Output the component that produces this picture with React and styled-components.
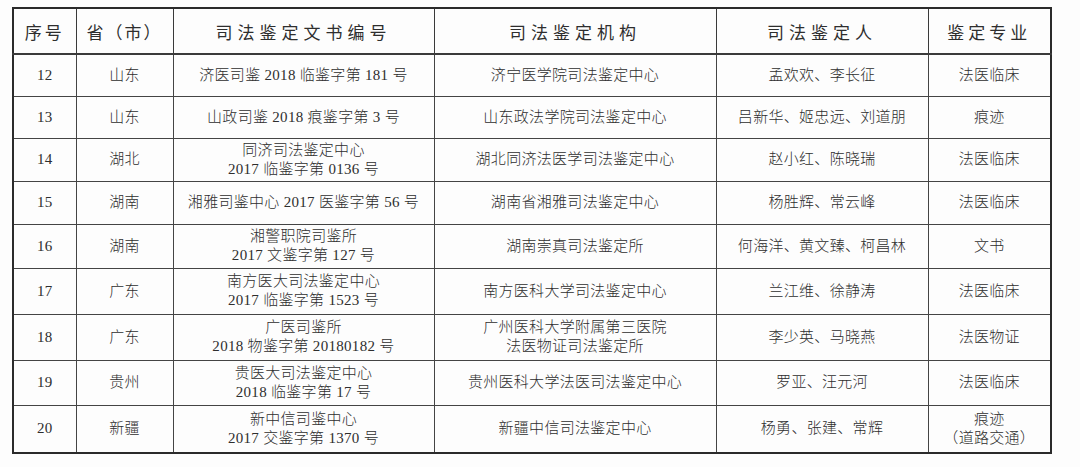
import React from "react";
import styled, { createGlobalStyle } from "styled-components";

const GlobalStyle = createGlobalStyle`
  html, body {
    margin: 0;
    padding: 0;
    background: #ffffff;
  }
`;

const Page = styled.div`
  width: 1080px;
  height: 467px;
  box-sizing: border-box;
  padding: 7px 0 0 12px;
  background: #fdfdfd;
`;

const Table = styled.table`
  width: 1038px;
  border-collapse: collapse;
  table-layout: fixed;
  border: 2px solid #2b2b2b;
  color: #2e2e2e;
  font-family: "Liberation Serif", "Noto Sans CJK SC", serif;
`;

const HeadCell = styled.th`
  border: 1px solid #3a3a3a;
  border-bottom-width: 2px;
  font-weight: 400;
  font-size: 17px;
  letter-spacing: ${(props) => props.spacing || 4}px;
  text-align: center;
  padding: 0;
  height: 44px;
`;

const Cell = styled.td`
  border: 1px solid #444;
  font-size: 15px;
  font-weight: 300;
  letter-spacing: 0.3px;
  line-height: 19px;
  text-align: center;
  vertical-align: middle;
  padding: 0;
  white-space: nowrap;
`;

const Row = styled.tr`
  height: ${(props) => props.h}px;
`;

const columns = [
  { title: "序号", width: 63, spacing: 3 },
  { title: "省（市）", width: 97, spacing: 2 },
  { title: "司法鉴定文书编号", width: 261, spacing: 5 },
  { title: "司法鉴定机构", width: 282, spacing: 5 },
  { title: "司法鉴定人", width: 212, spacing: 5 },
  { title: "鉴定专业", width: 123, spacing: 4 },
];

const rows = [
  { h: 42, no: "12", prov: "山东", doc: ["济医司鉴 2018 临鉴字第 181 号"], org: ["济宁医学院司法鉴定中心"], who: "孟欢欢、李长征", field: ["法医临床"] },
  { h: 42, no: "13", prov: "山东", doc: ["山政司鉴 2018 痕鉴字第 3 号"], org: ["山东政法学院司法鉴定中心"], who: "吕新华、姬忠远、刘道朋", field: ["痕迹"] },
  { h: 43, no: "14", prov: "湖北", doc: ["同济司法鉴定中心", "2017 临鉴字第 0136 号"], org: ["湖北同济法医学司法鉴定中心"], who: "赵小红、陈晓瑞", field: ["法医临床"] },
  { h: 43, no: "15", prov: "湖南", doc: ["湘雅司鉴中心 2017 医鉴字第 56 号"], org: ["湖南省湘雅司法鉴定中心"], who: "杨胜辉、常云峰", field: ["法医临床"] },
  { h: 44, no: "16", prov: "湖南", doc: ["湘警职院司鉴所", "2017 文鉴字第 127 号"], org: ["湖南崇真司法鉴定所"], who: "何海洋、黄文臻、柯昌林", field: ["文书"] },
  { h: 46, no: "17", prov: "广东", doc: ["南方医大司法鉴定中心", "2017 临鉴字第 1523 号"], org: ["南方医科大学司法鉴定中心"], who: "兰江维、徐静涛", field: ["法医临床"] },
  { h: 46, no: "18", prov: "广东", doc: ["广医司鉴所", "2018 物鉴字第 20180182 号"], org: ["广州医科大学附属第三医院", "法医物证司法鉴定所"], who: "李少英、马晓燕", field: ["法医物证"] },
  { h: 45, no: "19", prov: "贵州", doc: ["贵医大司法鉴定中心", "2018 临鉴字第 17 号"], org: ["贵州医科大学法医司法鉴定中心"], who: "罗亚、汪元河", field: ["法医临床"] },
  { h: 48, no: "20", prov: "新疆", doc: ["新中信司鉴中心", "2017 交鉴字第 1370 号"], org: ["新疆中信司法鉴定中心"], who: "杨勇、张建、常辉", field: ["痕迹", "（道路交通）"] },
];

const Lines = ({ items }) =>
  items.map((line, i) => <div key={i}>{line}</div>);

export default function App() {
  return (
    <Page>
      <GlobalStyle />
      <Table>
        <colgroup>
          {columns.map((c) => (
            <col key={c.title} style={{ width: c.width }} />
          ))}
        </colgroup>
        <thead>
          <tr>
            {columns.map((c) => (
              <HeadCell key={c.title} spacing={c.spacing}>
                {c.title}
              </HeadCell>
            ))}
          </tr>
        </thead>
        <tbody>
          {rows.map((r) => (
            <Row key={r.no} h={r.h}>
              <Cell>{r.no}</Cell>
              <Cell>{r.prov}</Cell>
              <Cell>
                <Lines items={r.doc} />
              </Cell>
              <Cell>
                <Lines items={r.org} />
              </Cell>
              <Cell>{r.who}</Cell>
              <Cell>
                <Lines items={r.field} />
              </Cell>
            </Row>
          ))}
        </tbody>
      </Table>
    </Page>
  );
}
